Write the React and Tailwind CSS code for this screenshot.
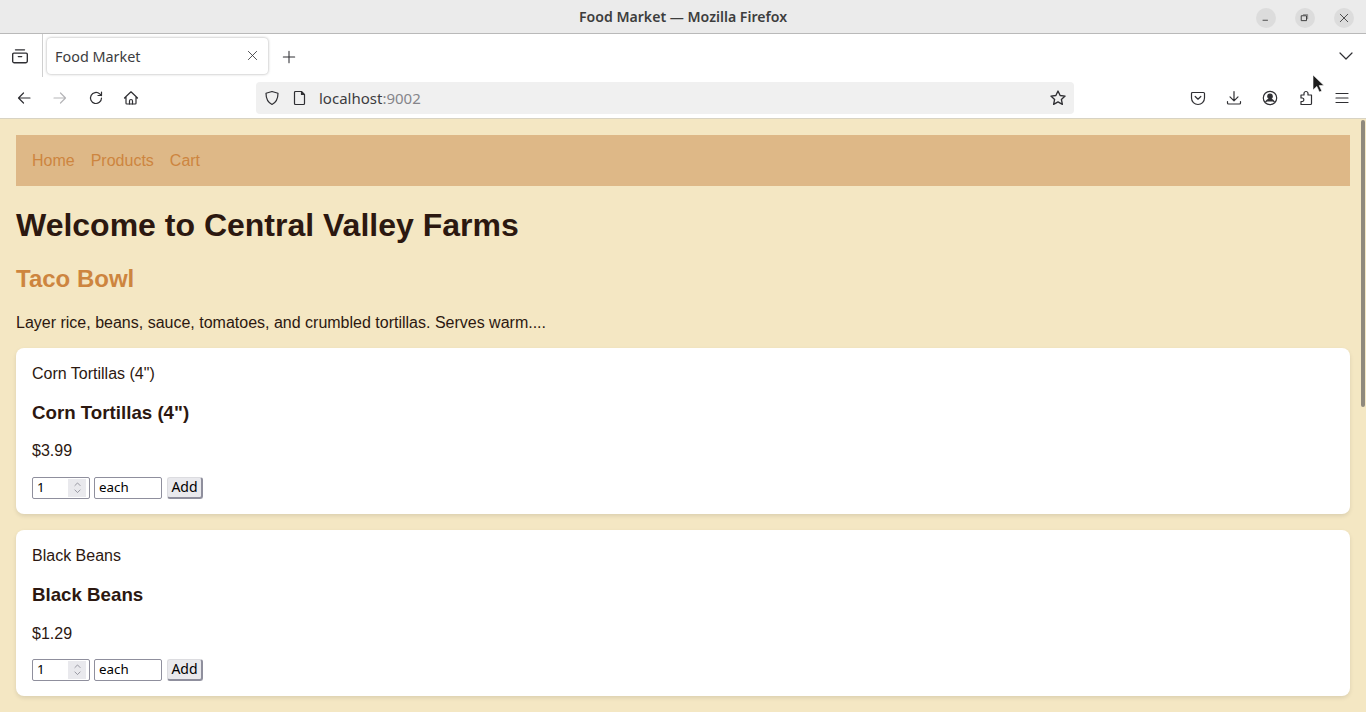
import { ChevronDown, ChevronUp } from 'lucide-react';

const items = [
  { name: 'Corn Tortillas (4")', price: '$3.99' },
  { name: 'Black Beans', price: '$1.29' },
];

const Icon = ({ className = '', children, size = 16 }) => (
  <svg
    width={size}
    height={size}
    viewBox="0 0 16 16"
    fill="none"
    stroke="currentColor"
    strokeWidth="1.2"
    strokeLinecap="round"
    strokeLinejoin="round"
    className={className}
  >
    {children}
  </svg>
);

const WindowButton = ({ children }) => (
  <div className="w-5 h-5 rounded-full bg-[#dcdcdc] flex items-center justify-center text-[#3d3d3d]">
    {children}
  </div>
);

const TitleBar = () => (
  <div className="relative h-[34px] bg-[#ebebeb] border-b border-[#b9b9b9] flex items-center justify-center">
    <span className="text-[14.1px] font-semibold text-[#3d3d3d]">Food Market — Mozilla Firefox</span>
    <div className="absolute right-[12px] top-[8px] flex gap-[19px]">
      <WindowButton>
        <Icon size={12}><path d="M4 11h6" /></Icon>
      </WindowButton>
      <WindowButton>
        <Icon size={12}><rect x="3.5" y="5" width="6.5" height="6.5" strokeWidth="1.3" /><path d="M6 3.5h5.5v5.5" strokeWidth="0.7" /></Icon>
      </WindowButton>
      <WindowButton>
        <Icon size={12}><path d="M3 3l10 10M13 3L3 13" /></Icon>
      </WindowButton>
    </div>
  </div>
);

const TabStrip = () => (
  <div className="h-[43px] flex items-center text-[#2f2f33]">
    <div className="w-[42px] h-[43px] flex items-center justify-center pr-[2px] shrink-0">
      <Icon size={18}>
        <path d="M4 2.5h8M2.5 5.5h11a1 1 0 0 1 1 1v6a1.5 1.5 0 0 1-1.5 1.5H3A1.5 1.5 0 0 1 1.5 13V6.5a1 1 0 0 1 1-1z" />
        <path d="M6.5 8.5h3" />
      </Icon>
    </div>
    <div className="w-px h-[43px] bg-[#cfcfcf] shrink-0" />
    <div className="ml-[4px] mt-[1px] w-[221px] h-[36px] bg-white rounded-[4px] shadow-[0_0_3px_rgba(0,0,0,0.35)] flex items-center justify-between pl-[8px] pr-[10px] shrink-0">
      <span className="text-[14.4px] text-[#3c3c40] mt-[1px]">Food Market</span>
      <Icon size={11} className="mt-[-1px]"><path d="M2 2l12 12M14 2L2 14" /></Icon>
    </div>
    <div className="ml-[14px] mt-[2px] flex items-center">
      <Icon size={14}><path d="M8 1.5v13M1.5 8h13" /></Icon>
    </div>
    <div className="ml-auto mr-[12px]">
      <Icon size={16}><path d="M2 5l6 6 6-6" /></Icon>
    </div>
  </div>
);

const NavBar = () => (
  <div className="h-[42px] pt-[1px] flex items-center border-b border-[#d8d3c3] text-[#2f2f33] relative">
    <div className="pl-[16px] flex items-center gap-[20px] w-[256px] shrink-0">
      <Icon><path d="M14 8H2.5M7.5 3L2.5 8l5 5" /></Icon>
      <Icon className="text-[#b5b5b8]"><path d="M2 8h11.5M8.5 3l5 5-5 5" /></Icon>
      <Icon><path d="M13.5 8a5.5 5.5 0 1 1-1.8-4.1L13.5 5.5M13.5 2v3.5H10" /></Icon>
      <Icon className="-ml-[1px]">
        <path d="M1.5 8L8 1.8 14.5 8M3 7v6.2a.8.8 0 0 0 .8.8h8.4a.8.8 0 0 0 .8-.8V7" />
        <path d="M6.5 14v-3a1.5 1.5 0 0 1 3 0v3" />
      </Icon>
    </div>
    <div className="w-[818px] h-[32px] bg-[#f0f0f0] rounded-[4px] flex items-center pl-[8px] pr-[8px] shrink-0">
      <Icon size={16}><path d="M8 1.5l6 1.8c0 5-1.5 9-6 11.2C3.5 12.3 2 8.3 2 3.3z" /></Icon>
      <Icon size={16} className="ml-[12px]"><path d="M3.5 1.5h6l3 3v9a1 1 0 0 1-1 1h-8a1 1 0 0 1-1-1v-11a1 1 0 0 1 1-1zM9.5 1.5v3h3" /></Icon>
      <span className="ml-[11px] text-[15px] text-[#3c3c40]">
        localhost<span className="text-[#85858a]">:9002</span>
      </span>
      <Icon size={18} className="ml-auto mr-[-1px]"><path d="M8 1.8l1.9 4 4.4.5-3.3 3 .9 4.4L8 11.5l-3.9 2.2.9-4.4-3.3-3 4.4-.5z" /></Icon>
    </div>
    <div className="ml-auto flex items-center gap-[20px] pr-[16px]">
      <Icon><path d="M2.5 2.5h11a1 1 0 0 1 1 1V8a6.5 6.5 0 0 1-13 0V3.5a1 1 0 0 1 1-1z" /><path d="M5.2 6.5L8 9.2l2.8-2.7" /></Icon>
      <Icon><path d="M8 1.5v9M4 6.8l4 4 4-4M1.5 11.5v1.5a1 1 0 0 0 1 1h11a1 1 0 0 0 1-1v-1.5" /></Icon>
      <Icon>
        <circle cx="8" cy="8" r="6.7" />
        <circle cx="8" cy="6.4" r="2.2" fill="currentColor" />
        <path d="M3.8 11.6c1-1.6 2.4-2.2 4.2-2.2s3.2.6 4.2 2.2" fill="currentColor" />
      </Icon>
      <Icon><path d="M6 14.5h6.5a1 1 0 0 0 1-1V5h-3.5V3.5a2 2 0 0 0-4 0V5H3v3h1.5a1.8 1.8 0 0 1 0 3.5H3v3z" /></Icon>
      <Icon><path d="M2 3.5h12M2 8h12M2 12.5h12" /></Icon>
    </div>
    {/* mouse pointer */}
    <svg width="14" height="20" viewBox="0 0 14 20" className="absolute left-[1312px] top-[-3px]">
      <path d="M1 1v15l3.8-3.6 2.6 5.6 2.4-1-2.6-5.4H12z" fill="#1c1c1c" stroke="#fff" strokeWidth="0.6" />
    </svg>
  </div>
);

const ProductCard = ({ item }) => (
  <div className="bg-white rounded-lg px-4 pt-[17px] pb-[15.4px] shadow-[0_2px_4px_rgba(0,0,0,0.1)]">
    <div>{item.name}</div>
    <h3 className="text-[18.72px] font-bold my-[18.72px]">{item.name}</h3>
    <p className="mb-[16.3px]">{item.price}</p>
    <div className="flex items-center font-['Noto_Sans',sans-serif] text-[13.33px] text-black leading-none">
      <div className="relative w-[58px] h-[22px] bg-white border border-[#8f8f9d] rounded-[2px] flex items-center pl-[4px]">
        1
        <div className="absolute right-[3px] top-[1px] w-[18px] h-[18px] bg-[#e9e9ed] flex flex-col items-center justify-center text-[#7d7d88]">
          <ChevronUp size={13} strokeWidth={1.7} className="-mb-[3px]" />
          <ChevronDown size={13} strokeWidth={1.7} />
        </div>
      </div>
      <div className="w-[68px] h-[22px] ml-[4px] bg-white border border-[#8f8f9d] rounded-[2px] flex items-center pl-[4px]">each</div>
      <button className="ml-[5px] w-[36px] h-[22px] bg-[#e9e9ed] border border-[#dcdce0] border-b-[#8f8f9d] border-r-[#8f8f9d] border-b-2 border-r-2 rounded-[3px] flex items-center justify-center text-[14px]">Add</button>
    </div>
  </div>
);

const App = () => (
  <div className="w-[1366px] h-[712px] overflow-hidden flex flex-col bg-white font-['Noto_Sans',sans-serif]">
    <TitleBar />
    <TabStrip />
    <NavBar />
    <div className="relative flex-1 overflow-hidden bg-[#f4e7c3] font-['Liberation_Sans',sans-serif] text-[#2c1810] leading-[normal] px-4 pt-4">
      <nav className="h-[51px] bg-[#deb887] flex items-center gap-4 px-4 text-[#cd853f]">
        <span>Home</span>
        <span>Products</span>
        <span>Cart</span>
      </nav>
      <h1 className="text-[32px] font-bold leading-[37px] mt-[21px]">Welcome to Central Valley Farms</h1>
      <h2 className="text-[24px] font-bold leading-[28px] mt-[21px] text-[#cd853f]">Taco Bowl</h2>
      <p className="leading-[18px] mt-[21px]">Layer rice, beans, sauce, tomatoes, and crumbled tortillas. Serves warm....</p>
      <div className="flex flex-col gap-4 mt-[16px]">
        {items.map((item) => (
          <ProductCard key={item.name} item={item} />
        ))}
      </div>
      {/* scrollbar thumb */}
      <div className="absolute right-[1px] top-[1px] w-[4px] h-[287px] bg-[#8f897c] rounded-full" />
    </div>
  </div>
);

export default App;
